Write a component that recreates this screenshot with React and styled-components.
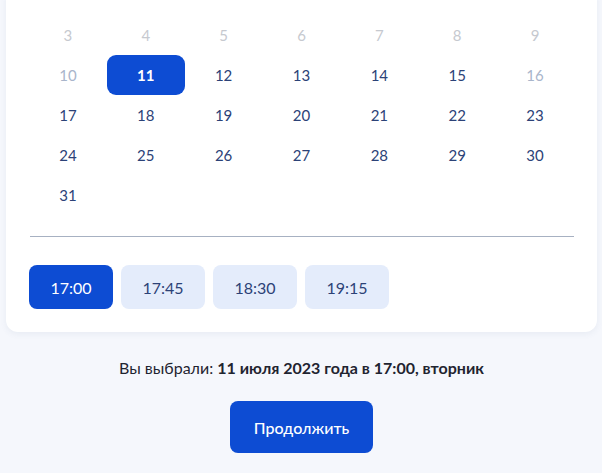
import React from "react";
import styled, { createGlobalStyle } from "styled-components";

const Global = createGlobalStyle`
  html, body { margin: 0; padding: 0; background: #f5f7fc; }
  body { font-family: Lato, "Noto Sans", sans-serif; overflow: hidden; }
  * { box-sizing: border-box; }
`;

const Page = styled.div`
  width: 602px;
  height: 473px;
  display: flex;
  flex-direction: column;
  align-items: center;
  padding: 0 5px 0 6px;
`;

const Card = styled.div`
  width: 100%;
  margin-top: -12px;
  background: #fff;
  border-radius: 12px;
  box-shadow: 0 2px 6px rgba(80, 100, 140, 0.08);
  padding: 27px 23px 23px 23px;
`;

const Grid = styled.div`
  display: grid;
  grid-template-columns: repeat(7, 1fr);
  grid-auto-rows: 40px;
  width: 545px;
`;

const Day = styled.div`
  display: flex;
  align-items: center;
  justify-content: center;
  font-size: 15px;
  border-radius: 9px;
  color: ${(p) =>
    p.$kind === "past" ? "#c6c9cf" : p.$kind === "muted" ? "#a9b5cb" : "#2c4277"};
  background: ${(p) => (p.$kind === "selected" ? "#0d4cd3" : "transparent")};
  ${(p) => p.$kind === "selected" && "color: #fff; font-weight: 700;"}
`;

const Divider = styled.div`
  height: 1px;
  background: #a7b1c2;
  margin: 21px 0 28px 1px;
  width: 544px;
`;

const Times = styled.div`
  display: flex;
  gap: 8px;
`;

const Time = styled.button`
  width: 84px;
  height: 44px;
  border: none;
  border-radius: 8px;
  font-family: Lato, "Noto Sans", sans-serif;
  font-size: 16px;
  background: ${(p) => (p.$active ? "#0d4cd3" : "#e4ecfb")};
  color: ${(p) => (p.$active ? "#fff" : "#2c4277")};
  padding: 0;
`;

const Summary = styled.p`
  margin: 26px 0 0;
  font-size: 16px;
  line-height: 20px;
  color: #1f2430;
  b { font-weight: 700; }
`;

const Continue = styled.button`
  margin-top: 23px;
  width: 143px;
  height: 52px;
  border: none;
  border-radius: 8px;
  background: #0d4cd3;
  color: #fff;
  font-family: Lato, "Noto Sans", sans-serif;
  font-size: 16px;
  font-weight: 500;
`;

const days = [
  [3, "past"], [4, "past"], [5, "past"], [6, "past"], [7, "past"], [8, "past"], [9, "past"],
  [10, "muted"], [11, "selected"], [12], [13], [14], [15], [16, "muted"],
  [17], [18], [19], [20], [21], [22], [23],
  [24], [25], [26], [27], [28], [29], [30],
  [31],
];

const times = ["17:00", "17:45", "18:30", "19:15"];

export default function App() {
  return (
    <>
      <Global />
      <Page>
        <Card>
          <Grid>
            {days.map(([d, k]) => (
              <Day key={d} $kind={k}>{d}</Day>
            ))}
          </Grid>
          <Divider />
          <Times>
            {times.map((t, i) => (
              <Time key={t} $active={i === 0}>{t}</Time>
            ))}
          </Times>
        </Card>
        <Summary>
          Вы выбрали: <b>11 июля 2023 года в 17:00, вторник</b>
        </Summary>
        <Continue>Продолжить</Continue>
      </Page>
    </>
  );
}
